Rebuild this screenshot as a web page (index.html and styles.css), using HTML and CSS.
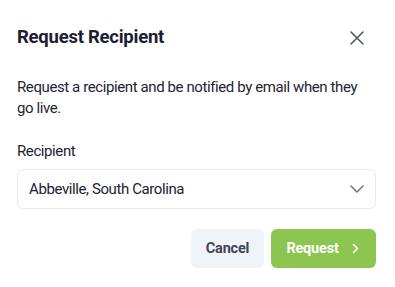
FILE: index.html
```html
<!DOCTYPE html>
<html lang="en">
<head>
<meta charset="utf-8">
<title>Request Recipient</title>
<link rel="stylesheet" href="styles.css">
</head>
<body>
<div class="modal">
  <div class="header">
    <h2 class="title">Request Recipient</h2>
    <button class="close" aria-label="Close">
      <svg width="14" height="14" viewBox="0 0 14 14"><path d="M1 1L13 13M13 1L1 13" stroke="#4a5160" stroke-width="1.5" fill="none" stroke-linecap="round"/></svg>
    </button>
  </div>
  <p class="desc">Request a recipient and be notified by email when they go live.</p>
  <label class="label">Recipient</label>
  <div class="select">
    <span class="value">Abbeville, South Carolina</span>
    <svg width="14" height="8" viewBox="0 0 14 8"><path d="M1 1L7 7L13 1" stroke="#6b7280" stroke-width="1.5" fill="none" stroke-linecap="round" stroke-linejoin="round"/></svg>
  </div>
  <div class="actions">
    <button class="btn cancel">Cancel</button>
    <button class="btn primary">Request
      <svg width="7" height="11" viewBox="0 0 7 11"><path d="M1.5 1.5L5.5 5.5L1.5 9.5" stroke="#fff" stroke-width="1.6" fill="none" stroke-linecap="round" stroke-linejoin="round"/></svg>
    </button>
  </div>
</div>
</body>
</html>
```
FILE: styles.css
```css
* { box-sizing: border-box; }
html, body { margin: 0; background: #fff; }
body {
  font-family: "Roboto", "Noto Sans", sans-serif;
  color: #1b2130;
}
.modal {
  width: 395px;
  padding: 25px 19px 0 17px;
  display: flex;
  flex-direction: column;
}
.header {
  display: flex;
  align-items: center;
  justify-content: space-between;
  height: 25px;
}
.title {
  margin: 0;
  font-size: 18.5px;
  font-weight: 700;
  letter-spacing: -0.25px;
  line-height: 25px;
}
.close {
  border: 0;
  background: none;
  padding: 0;
  margin-right: 12px;
  display: flex;
}
.desc {
  margin: 27px 0 0;
  padding-right: 10px;
  font-size: 15px;
  letter-spacing: -0.4px;
  line-height: 21px;
  color: #1e2433;
}
.label {
  margin-top: 22px;
  font-size: 15px;
  letter-spacing: -0.4px;
  line-height: 21px;
}
.select {
  margin-top: 7px;
  height: 40px;
  border: 1px solid #e8ebef;
  border-radius: 6px;
  display: flex;
  align-items: center;
  justify-content: space-between;
  padding: 0 11px 0 11px;
  font-size: 15px;
  letter-spacing: -0.4px;
}
.actions {
  margin-top: 20px;
  display: flex;
  justify-content: flex-end;
  gap: 7px;
}
.btn {
  height: 39px;
  border: 0;
  border-radius: 6px;
  font-family: inherit;
  font-size: 14.5px;
  font-weight: 700;
  letter-spacing: -0.2px;
  display: flex;
  align-items: center;
  justify-content: center;
}
.cancel {
  width: 73px;
  background: #f0f3f8;
  color: #3f4554;
}
.primary {
  width: 105px;
  background: #8cc550;
  color: #fff;
  gap: 13px;
  padding-left: 4px;
}
```
